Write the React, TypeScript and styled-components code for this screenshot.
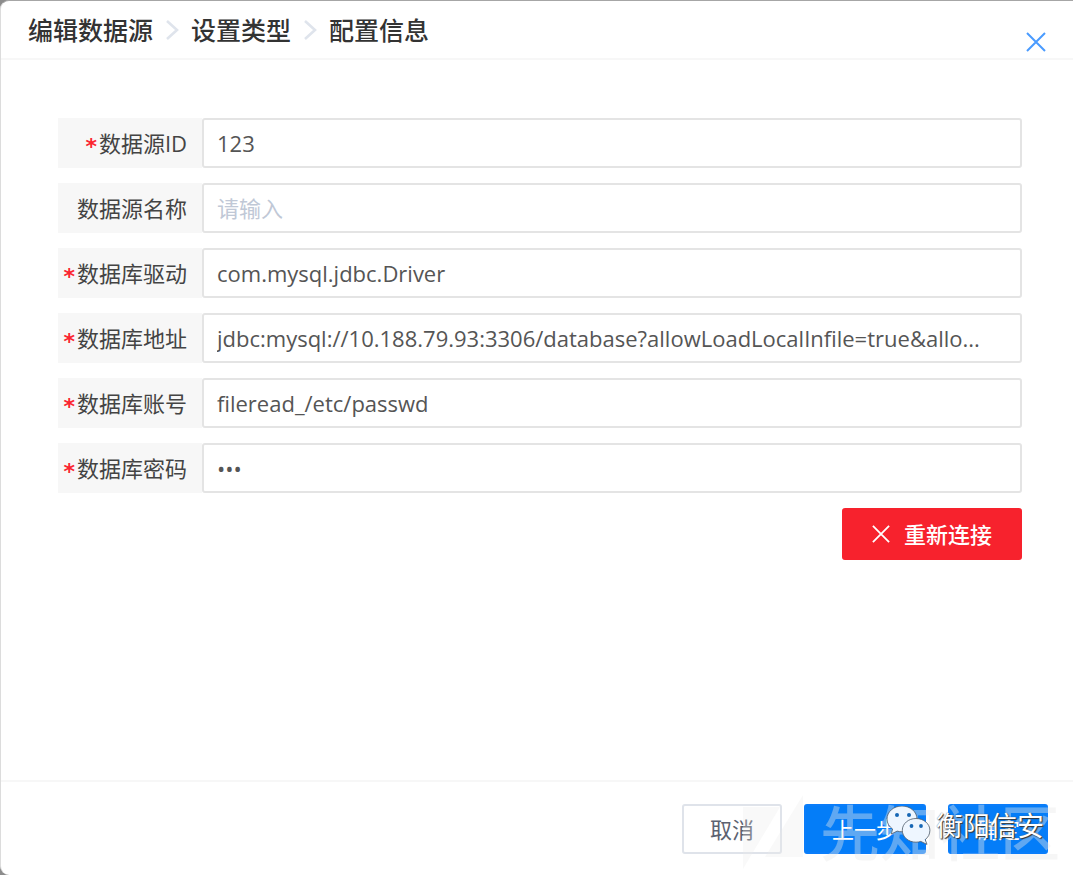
import React from "react";
import styled, { createGlobalStyle } from "styled-components";

const GlobalStyle = createGlobalStyle`
  *, *::before, *::after { box-sizing: border-box; }
  body { margin: 0; background: #fff; }
  body, button, input {
    font-family: "Open Sans", "Noto Sans CJK SC", sans-serif;
  }
`;

const Backdrop = styled.div`
  margin-right: 7px;
  background: #8c8c8c;
`;

const Dialog = styled.section`
  position: relative;
  display: flex;
  flex-direction: column;
  min-height: 100vh;
  background: #fff;
  border-top: 1px solid #a6a6a6;
  border-left: 1px solid #dcdcdc;
  border-radius: 9px 0 0 9px;
`;

const Header = styled.header`
  display: flex;
  align-items: center;
  justify-content: space-between;
  height: 59px;
  padding: 0 27px;
  border-bottom: 2px solid #f7f7f7;
`;

const Steps = styled.ol`
  display: flex;
  align-items: center;
  gap: 11px;
  margin: 0;
  padding: 0;
  list-style: none;
  font-size: 25px;
  line-height: 36px;
  font-weight: 500;
  color: #333;
`;

const Step = styled.li`
  display: flex;
  align-items: center;
  gap: 11px;
`;

const IconButton = styled.button`
  display: flex;
  align-self: flex-end;
  padding: 6px 0;
  border: 0;
  background: none;
  color: #4a9bff;
  cursor: pointer;
`;

const Form = styled.form`
  flex: 1;
  display: flex;
  flex-direction: column;
  gap: 15px;
  padding: 58px 51px 40px 57px;
`;

const Field = styled.div`
  display: flex;
  height: 50px;
`;

const Label = styled.label`
  flex: 0 0 144px;
  display: flex;
  align-items: center;
  justify-content: flex-end;
  padding-right: 15px;
  background: #f7f7f7;
  color: #444;
  font-size: 22px;
  line-height: 32px;
`;

const Required = styled.span`
  margin-right: 2px;
  padding-top: 8px;
  color: #fb2530;
  font-family: "DejaVu Sans", sans-serif;
  font-size: 22px;
  font-weight: 700;
`;

const Input = styled.input`
  flex: 1;
  min-width: 0;
  padding: 0 13px;
  border: 2px solid #e4e4e4;
  border-radius: 3px;
  background: #fff;
  color: #555;
  font-size: 22px;
  text-overflow: ellipsis;
  outline: none;
  &::placeholder { color: #c0c8d6; opacity: 1; }
`;

const Button = styled.button<{ $kind: "plain" | "primary" | "danger" }>`
  display: flex;
  align-items: center;
  justify-content: center;
  gap: 14px;
  height: ${(p) => (p.$kind === "danger" ? 52 : 50)}px;
  padding: 0 ${(p) => (p.$kind === "danger" ? 28 : 26)}px;
  border: 2px solid ${(p) => ({ plain: "#dfe3ea", primary: "#0a7dfa", danger: "#f7222d" })[p.$kind]};
  border-radius: 3px;
  background: ${(p) => ({ plain: "#fff", primary: "#047df8", danger: "#f7222d" })[p.$kind]};
  color: ${(p) => (p.$kind === "plain" ? "#5c6270" : "#fff")};
  font-size: 22px;
  line-height: 32px;
  font-weight: ${(p) => (p.$kind === "danger" ? 500 : 400)};
  cursor: pointer;
`;

const Actions = styled.div`
  display: flex;
  justify-content: flex-end;
`;

const Footer = styled.footer`
  display: flex;
  justify-content: flex-end;
  gap: 22px;
  padding: 22px 25px 21px;
  border-top: 2px solid #f7f7f7;
`;

const CommunityMark = styled.div`
  position: absolute;
  right: 13px;
  bottom: 4px;
  display: flex;
  align-items: center;
  gap: 15px;
  color: rgba(232, 232, 232, 0.4);
  font-size: 60px;
  font-weight: 500;
  line-height: 76px;
  pointer-events: none;
`;

const AccountMark = styled.div`
  position: absolute;
  right: 29px;
  bottom: 27px;
  display: flex;
  align-items: center;
  gap: 4px;
  color: #fff;
  font-size: 27px;
  line-height: 44px;
  text-shadow: 1px 1px 1px #333, 0 0 1px #555;
  pointer-events: none;
`;

const CloseIcon = ({ size, width }: { size: number; width: number }) => (
  <svg width={size} height={size} viewBox="0 0 20 20" fill="none" stroke="currentColor" strokeWidth={width} aria-hidden="true">
    <path d="M1 1 19 19M19 1 1 19" />
  </svg>
);

const Chevron = () => (
  <svg width="16" height="20" viewBox="0 0 16 20" fill="none" stroke="#dfe4ec" strokeWidth="2.6" aria-hidden="true">
    <path d="M3 1 13 10 3 19" />
  </svg>
);

const WeChatIcon = () => (
  <svg width="46" height="40" viewBox="0 0 46 40" aria-hidden="true">
    <path d="M16 0C7.500 0 1 5.800 1 13c0 4.200 2.200 7.700 5.600 10L5.300 28l5.900-2.900c1.600.5 3.100.7 4.800.7 8.300 0 15-5.600 15-12.800S24.300 0 16 0Z" fill="#eef6ff" stroke="#4b5968" strokeWidth="0.8" />
    <circle cx="11" cy="9" r="2" fill="#1767b5" />
    <circle cx="23" cy="9" r="2" fill="#1767b5" />
    <path d="M30 12.500c-7.600 0-13.700 5.200-13.700 11.800S22.400 36.200 30 36.200c1.700 0 3.300-.3 4.800-.8l6.200 3-1.800-4.800c3-2.200 4.700-5.500 4.700-9.300C43.900 17.700 37.600 12.500 30 12.500Z" fill="#eef6ff" stroke="#4b5968" strokeWidth="0.8" />
    <circle cx="25.500" cy="20" r="1.900" fill="#1767b5" />
    <circle cx="35" cy="20" r="1.900" fill="#1767b5" />
  </svg>
);

const steps = ["编辑数据源", "设置类型", "配置信息"];

const fields = [
  { id: "source-id", label: "数据源ID", required: true, value: "123" },
  { id: "source-name", label: "数据源名称", required: false, value: "" },
  { id: "driver", label: "数据库驱动", required: true, value: "com.mysql.jdbc.Driver" },
  { id: "url", label: "数据库地址", required: true, value: "jdbc:mysql://10.188.79.93:3306/database?allowLoadLocalInfile=true&allo..." },
  { id: "account", label: "数据库账号", required: true, value: "fileread_/etc/passwd" },
  { id: "password", label: "数据库密码", required: true, value: "123", type: "password" },
];

export default function App() {
  return (
    <>
      <GlobalStyle />
      <Backdrop>
        <Dialog>
          <Header>
            <Steps>
              {steps.map((s, i) => (
                <Step key={s}>
                  {i > 0 && <Chevron />}
                  {s}
                </Step>
              ))}
            </Steps>
            <IconButton type="button" aria-label="关闭">
              <CloseIcon size={20} width={2} />
            </IconButton>
          </Header>
          <Form>
            {fields.map((f) => (
              <Field key={f.id}>
                <Label htmlFor={f.id}>
                  {f.required && <Required>*</Required>}
                  {f.label}
                </Label>
                <Input id={f.id} type={f.type ?? "text"} defaultValue={f.value} placeholder="请输入" />
              </Field>
            ))}
            <Actions>
              <Button type="button" $kind="danger">
                <CloseIcon size={18} width={2} />
                重新连接
              </Button>
            </Actions>
          </Form>
          <Footer>
            <Button type="button" $kind="plain">取消</Button>
            <Button type="button" $kind="primary">上一步</Button>
            <Button type="button" $kind="primary">确定</Button>
          </Footer>
          <CommunityMark>
            <svg width="62" height="76" viewBox="0 0 62 76" fill="currentColor" fillOpacity="0.7" aria-hidden="true">
              <path d="M0 12H37L0 74ZM60 0V62H22Z" />
            </svg>
            先知社区
          </CommunityMark>
          <AccountMark>
            <WeChatIcon />
            衡阳信安
          </AccountMark>
        </Dialog>
      </Backdrop>
    </>
  );
}
